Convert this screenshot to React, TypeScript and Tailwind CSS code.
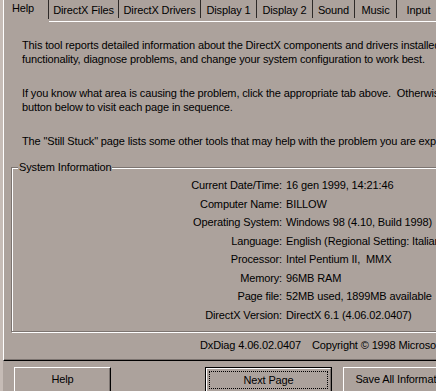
import React from "react";

const tabs = [
  { label: "DirectX Files", w: "w-[70px]" },
  { label: "DirectX Drivers", w: "w-[82px]" },
  { label: "Display 1", w: "w-[56px]" },
  { label: "Display 2", w: "w-[56px]" },
  { label: "Sound", w: "w-[42px]" },
  { label: "Music", w: "w-[42px]" },
  { label: "Input", w: "w-[44px]" },
];

const rows: [string, string][] = [
  ["Current Date/Time:", "16 gen 1999, 14:21:46"],
  ["Computer Name:", "BILLOW"],
  ["Operating System:", "Windows 98 (4.10, Build 1998)"],
  ["Language:", "English (Regional Setting: Italian)"],
  ["Processor:", "Intel Pentium II,  MMX"],
  ["Memory:", "96MB RAM"],
  ["Page file:", "52MB used, 1899MB available"],
  ["DirectX Version:", "DirectX 6.1 (4.06.02.0407)"],
];

export default function App() {
  return (
    <div className="w-[436px] h-[391px] overflow-hidden bg-[#aca29c] text-black text-[11px] tracking-[-0.13px] font-['Liberation_Sans',Arial,sans-serif] border-l-[3px] border-[#c6bcb6]">
      <div className="w-[560px] flex flex-col">
        {/* Tabs */}
        <div className="flex h-[22px]">
          <div className="w-[46px] h-[22px] border-l border-white flex">
            <span className="flex-1 pl-[8px] pt-[1px] leading-[14px]">Help</span>
            <div className="w-[1px] h-[19px] bg-[#2e2a28]" />
          </div>
          <div className="flex-1 flex h-[22px] border-b border-white">
            {tabs.map((t) => (
              <div key={t.label} className={`${t.w} h-[21px] flex shrink-0`}>
                <span className="flex-1 text-center pt-[3px] leading-[14px] whitespace-nowrap">
                  {t.label}
                </span>
                <div className="w-[1px] h-[18px] bg-[#2e2a28]" />
              </div>
            ))}
          </div>
        </div>

        {/* Panel */}
        <div className="h-[339px] border-l border-white border-b border-b-black shadow-[inset_0_-1px_0_#7c7470] flex flex-col">
          <div className="pl-[18px] pt-[16px] leading-[14px] whitespace-pre">
            <p>This tool reports detailed information about the DirectX components and drivers installed</p>
            <p>functionality, diagnose problems, and change your system configuration to work best.</p>
            <p className="mt-[20px]">If you know what area is causing the problem, click the appropriate tab above.  Otherwise</p>
            <p>button below to visit each page in sequence.</p>
            <p className="mt-[20px]">The "Still Stuck" page lists some other tools that may help with the problem you are experiencing.</p>
          </div>

          <fieldset className="ml-[7px] mt-[13px] w-[520px] border border-[#7c7470] shadow-[1px_1px_0_#ffffff,inset_1px_1px_0_#ffffff] pt-[2px] pb-[7px]">
            <legend className="ml-[6px] px-[1px] bg-[#aca29c] leading-[13px]">System Information</legend>
            <div className="grid grid-cols-[270px_1fr] leading-[18.5px] whitespace-pre">
              {rows.map(([k, v]) => (
                <React.Fragment key={k}>
                  <div className="text-right">{k}</div>
                  <div className="pl-[4px]">{v}</div>
                </React.Fragment>
              ))}
            </div>
          </fieldset>

          <div className="pl-[196px] mt-[6px] leading-[14px] whitespace-pre flex gap-[11px]">
            <span>DxDiag 4.06.02.0407</span>
            <span>Copyright © 1998 Microsoft Corporation.  All rights reserved.</span>
          </div>
        </div>

        {/* Buttons */}
        <div className="flex pt-[6px] pl-[11px]">
          <button className="w-[97px] h-[26px] border border-t-white border-l-white border-r-black border-b-black shadow-[inset_-1px_-1px_0_#7c7470] flex items-center justify-center pb-[2px] leading-[14px]">
            Help
          </button>
          <button className="ml-[94px] w-[127px] h-[26px] border border-black flex">
            <div className="flex-1 border border-t-white border-l-white border-r-[#7c7470] border-b-[#7c7470] p-[2px] flex">
              <div className="flex-1 border border-dotted border-black flex items-center justify-center leading-[14px]">
                Next Page
              </div>
            </div>
          </button>
          <button className="ml-[11px] w-[120px] h-[26px] border border-t-white border-l-white border-r-black border-b-black shadow-[inset_-1px_-1px_0_#7c7470] flex items-center justify-center pb-[2px] leading-[14px] whitespace-nowrap">
            Save All Information
          </button>
        </div>
      </div>
    </div>
  );
}
